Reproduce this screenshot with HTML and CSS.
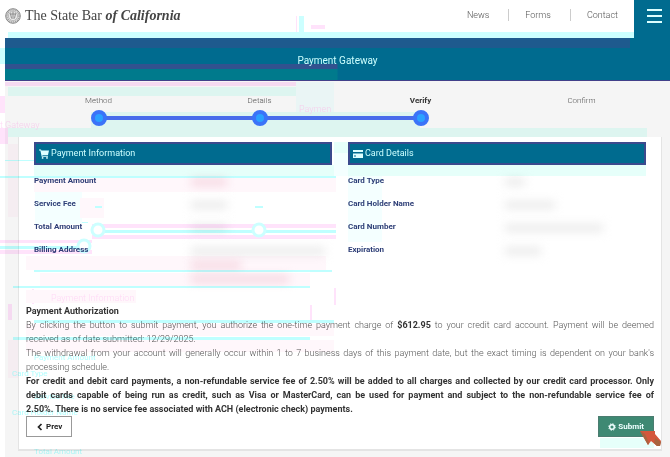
FILE: index.html
```html
<!DOCTYPE html>
<html lang="en">
<head>
<meta charset="utf-8">
<meta name="viewport" content="width=device-width, initial-scale=1">
<title>Payment Gateway</title>
<link rel="stylesheet" href="styles.css">
</head>
<body>
<header class="top">
  <a class="brand" href="#">
    <svg class="seal" viewBox="0 0 16 16" aria-hidden="true"><circle cx="8" cy="8" r="7.3" fill="#ddd" stroke="#888" stroke-width="1"/><circle cx="8" cy="8" r="6" fill="none" stroke="#999" stroke-width="1.4" stroke-dasharray="1 1"/><circle cx="8" cy="8" r="4.5" fill="#eee" stroke="#999" stroke-width=".6"/><path d="M8 4v7M5.500 5.500l1 5M10.500 5.500l-1 5M5 6h6" stroke="#888" fill="none"/></svg>
    <span class="brand-name">The State Bar <em>of California</em></span>
  </a>
  <nav class="nav">
    <a href="#">News</a>
    <a href="#">Forms</a>
    <a href="#">Contact</a>
  </nav>
  <button class="menu" type="button" aria-label="Menu"><span></span><span></span><span></span></button>
</header>
<h1 class="banner">Payment Gateway</h1>
<main class="page">
  <ol class="steps">
    <li class="step done"><span>Method</span><i></i></li>
    <li class="step done"><span>Details</span><i></i></li>
    <li class="step current"><span>Verify</span><i></i></li>
    <li class="step"><span>Confirm</span><i></i></li>
  </ol>
  <section class="card">
    <div class="panels">
      <section>
        <h2 class="panel-title"><svg class="icon" viewBox="0 0 10 10" aria-hidden="true"><path d="M0 .5h2l.4 1H10L9 6H3.300l.2.800H9v.9H2.700L1.400 1.400H0z"/><circle cx="3.600" cy="8.900" r=".9"/><circle cx="8" cy="8.900" r=".9"/></svg>Payment Information</h2>
        <dl class="facts">
          <dt>Payment Amount</dt><dd><span class="masked rosy w-s"></span></dd>
          <dt>Service Fee</dt><dd><span class="masked w-s"></span></dd>
          <dt>Total Amount</dt><dd><span class="masked w-s"></span></dd>
          <dt>Billing Address</dt><dd><span class="masked w-xl"></span><span class="masked rosy w-m"></span><span class="masked rosy w-l"></span></dd>
        </dl>
      </section>
      <section>
        <h2 class="panel-title"><svg class="icon" viewBox="0 0 10 10" aria-hidden="true"><path fill-rule="evenodd" d="M0 1h10v8H0zM0 3v1.500h10V3zM1 6.500v1h2v-1z"/></svg>Card Details</h2>
        <dl class="facts">
          <dt>Card Type</dt><dd><span class="masked w-xs"></span></dd>
          <dt>Card Holder Name</dt><dd><span class="masked w-m"></span></dd>
          <dt>Card Number</dt><dd><span class="masked w-l"></span></dd>
          <dt>Expiration</dt><dd><span class="masked w-s"></span></dd>
        </dl>
      </section>
    </div>
    <div class="terms">
      <h3>Payment Authorization</h3>
      <p><span class="full">By clicking the button to submit payment, you authorize the one-time payment charge of <strong>$612.95</strong> to your credit card account. Payment will be deemed</span> received as of date submitted: 12/29/2025.</p>
      <p>The withdrawal from your account will generally occur within 1 to 7 business days of this payment date, but the exact timing is dependent on your bank's processing schedule.</p>
      <p><strong><span class="full">For credit and debit card payments, a non-refundable service fee of 2.50% will be added to all charges and collected by our credit card processor. Only</span> <span class="full">debit cards capable of being run as credit, such as Visa or MasterCard, can be used for payment and subject to the non-refundable service fee of</span> 2.50%. There is no service fee associated with ACH (electronic check) payments.</strong></p>
    </div>
    <div class="actions">
      <button class="btn" type="button"><svg viewBox="0 0 8 8" aria-hidden="true"><path d="M5.500 1L2.500 4l3 3" fill="none" stroke="currentColor" stroke-width="1.700"/></svg>Prev</button>
      <button class="btn primary" type="submit"><svg viewBox="0 0 8 8" aria-hidden="true"><circle cx="4" cy="4" r="3.300" fill="none" stroke="currentColor" stroke-width="1" stroke-dasharray="1.300 1.300"/><circle cx="4" cy="4" r="2.300" fill="none" stroke="currentColor" stroke-width="1.500"/></svg>Submit
        <svg class="pointer" viewBox="0 0 22 16" aria-hidden="true"><path d="M0 0h15v3l6 7-1 5h-3l-6-5-3 4z" fill="#d4573c"/><path d="M0 0l8 14 1-2-4-9zM15 7l6 4-1 4h-3l-3-3z" fill="#a8643f"/></svg>
      </button>
    </div>
  </section>
</main>
<svg class="traces" viewBox="0 0 670 457" aria-hidden="true">
  <path fill="#ccffff" d="M8 32h626v6H8zM0 48h5v16H0zM299 16h5v16h-5z"/>
  <g fill="#e6fffa">
    <path d="M8 87h288v9H8zM91 112h13v16H91zM102 112h318v16H102zM0 128h647v9H0zM334 142h14v11h-14zM34 165h612v11H34z"/>
    <path d="M600 438h54v10h-54z"/>
  </g>
  <path fill="#f4ffff" d="M296 82h38v30h-38zM334 153h14v23h-14zM348 176h34v66h-34zM35 184h47v40H35z"/>
  <path fill="#ffe3fb" d="M5 82h291v4H5zM0 96h5v17H0zM0 128h8v16H0zM296 16h1v16h-1zM311 25h14v4h-14zM0 240h92v3H0zM0 250h92v4H0zM92 224h244v4H92zM92 235h244v4H92zM8 304h4v16H8zM32 289h2v15h-2zM310 305h2v15h-2zM334 288h2v17h-2z"/>
  <path fill="#fff7fb" d="M8 144h10v73H8zM34 178h302v14H34zM26 256h300v14H26zM40 273h270v13H40zM26 290h110v13H26zM80 198h24v20H80zM26 324h308v12H26zM26 340h308v12H26zM8 340h10v38H8z"/>
  <path fill="#bfffff" d="M5 160h29v1H5zM0 176h336v2H0zM95 206h7v2h-7zM255 206h8v2h-8zM82 222h6v1h-6zM104 230h232v3H104zM0 246h84v3H0zM34 270h298v2H34zM13 286h297v2H13zM34 320h300v3H34zM13 337h297v3H13z"/>
  <g fill="#fff" stroke="#ccffff" stroke-width="3"><circle cx="98" cy="230" r="6"/><circle cx="259" cy="230" r="6"/><circle cx="84" cy="246" r="6"/></g>
  <g class="trace-pink">
    <text x="0" y="128">t Gateway</text><text x="299" y="112">Paymen</text><text x="51" y="301">Payment Information</text>
  </g>
  <g class="trace-cyan">
    <text x="34" y="360">Payment Amount</text><text x="12" y="376">Card Type</text><text x="34" y="399">Service Fee</text><text x="12" y="415">Card Holder Name</text><text x="34" y="454">Total Amount</text>
  </g>
</svg>
</body>
</html>
```
FILE: styles.css
```css
* { box-sizing: border-box; }
body {
  margin: 0;
  padding-left: 5px;
  position: relative;
  font: 300 9px/14px Roboto, "Liberation Sans", sans-serif;
  color: #555;
  background: #fff;
}
h1, h2, h3, p, ol, dl, dd { margin: 0; padding: 0; font-weight: 300; }
a { color: inherit; text-decoration: none; }
button { font-family: inherit; cursor: pointer; }

.top { display: flex; align-items: stretch; height: 38px; }
.brand { display: flex; align-items: center; gap: 4px; padding-bottom: 6px; }
.seal { width: 16px; height: 16px; }
.brand-name { font: 14px/20px "Liberation Serif", serif; color: #444; white-space: nowrap; }
.brand-name em { font-weight: 700; }
.nav { display: flex; align-items: center; margin-left: auto; padding: 0 16px 8px 0; color: #555; }
.nav a { line-height: 12px; }
.nav a + a { margin-left: 19px; padding-left: 16px; border-left: 1px solid #ccc; }
.menu {
  width: 36px;
  padding: 9px 8px 0 13px;
  border: 0;
  background: #006b8f;
  display: flex;
  flex-direction: column;
  gap: 4px;
}
.menu span { width: 100%; height: 2px; background: #dff; }

.banner {
  padding: 13px 0 9px;
  font-size: 10px;
  line-height: 20px;
  font-weight: 400;
  text-align: center;
  color: #cff;
  background:
    linear-gradient(#1e5a8e 10px, transparent 10px) 0 0 / 94% 100% no-repeat,
    linear-gradient(#006b8f 26px, #32528f 26px 31px, #007a8c 31px) 0 0 / 50% 100% no-repeat,
    #006b8f;
  border-bottom: 1px solid #42408a;
}

.page { padding: 13px 8px 8px 13px; background: #f5f5f5; }
.steps { display: flex; list-style: none; }
.step { flex: 1; position: relative; display: flex; flex-direction: column; align-items: center; gap: 2px; font-size: 8px; height: 43px; }
.step i { width: 16px; height: 16px; border-radius: 50%; z-index: 1; }
.done i, .current i { background: #2ba1ff; border: 4px solid #3b73f8; }
.done::after { content: ""; position: absolute; top: 22px; left: 50%; width: 100%; height: 4px; background: #506cf0; }
.current span { font-weight: 700; color: #333; }

.card { padding: 5px 7px 12px; background: #fff; border: solid #e4e4e4; border-width: 0 1px 2px; }
.panels { display: grid; grid-template-columns: 1fr 1fr; gap: 16px; padding: 0 8px; min-height: 162px; }
.panel-title {
  display: flex;
  align-items: center;
  gap: 2px;
  padding: 0 3px;
  font-size: 9px;
  line-height: 19px;
  font-weight: 400;
  color: #cff;
  background: #006b8f;
  border: 2px solid #3b4a8d;
}
.icon { width: 10px; height: 10px; fill: #dff; }
.facts { display: grid; grid-template-columns: 1fr 1fr; column-gap: 16px; grid-auto-rows: 23px; padding-top: 9px; }
.facts dt { font-size: 8px; font-weight: 700; color: #304078; }
.masked { display: block; height: 8px; margin: 4px 0 6px; background: #ebebeb; filter: blur(5px); }
.rosy { background: #f6e0e6; }
.w-xs { width: 20px; }
.w-s { width: 36px; }
.w-m { width: 50px; }
.w-l { width: 98px; }
.w-xl { width: 134px; }

.terms { text-align: justify; color: #555; }
.terms h3, .terms strong { font-size: 9px; font-weight: 700; color: #333; }
.full { display: block; text-align-last: justify; }
.actions { display: flex; justify-content: space-between; }
.btn {
  position: relative;
  display: flex;
  align-items: center;
  gap: 2px;
  height: 21px;
  padding: 0 9px;
  font-size: 8px;
  font-weight: 700;
  color: #222;
  background: #fff;
  border: 1px solid #999;
}
.btn svg { width: 8px; height: 8px; }
.primary { color: #efffff; background: #3e8973; border-color: #4b7c70; }
.btn .pointer { position: absolute; top: 14px; left: 41px; width: 22px; height: 16px; z-index: 2; }

.traces { position: absolute; top: 0; left: 0; width: 670px; height: 457px; pointer-events: none; mix-blend-mode: multiply; }
.trace-pink { font-size: 9px; fill: #ffd9f6; }
.trace-cyan { font-size: 8px; fill: #b3ffff; font-weight: 400; }
```
